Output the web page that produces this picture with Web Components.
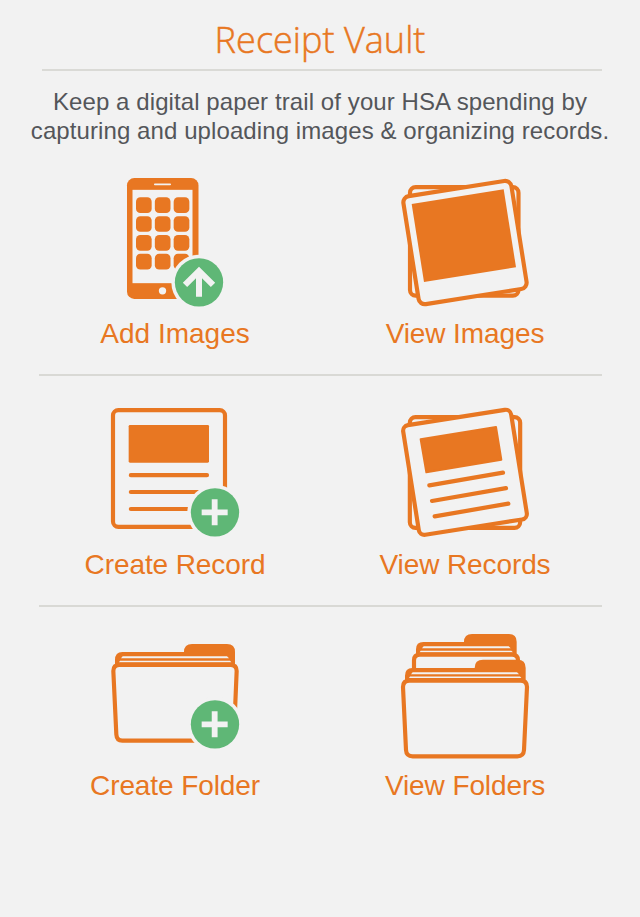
<!DOCTYPE html>
<html lang="en">
<head>
<meta charset="utf-8">
<title>Receipt Vault</title>
<style>
html,body{margin:0;background:#f2f2f2}
</style>
</head>
<body>
<receipt-vault></receipt-vault>
<script>
const BG = '#f2f2f2';
const badge = (x, y, glyph) => `<circle cx="${x}" cy="${y}" r="83" fill="${BG}"/><circle cx="${x}" cy="${y}" r="72.5" fill="#5fb776"/>${glyph}`;
const plus = (x, y) => badge(x, y, `<path d="M${x-40} ${y}h78M${x-1} ${y-39}v78" stroke="${BG}" stroke-width="17.5" fill="none"/>`);
const apps = () => {
  let s = '';
  for (const y of [97, 153.5, 210, 266.5]) for (const x of [78, 134.5, 191]) s += `<rect x="${x}" y="${y}" width="47" height="47" rx="13"/>`;
  return s;
};
const ICONS = {
  'phone-upload': `<g transform="translate(30 0)">
    <rect x="51" y="39" width="214.500" height="363" rx="22"/>
    <rect x="67.500" y="74.500" width="180" height="280" fill="${BG}"/>
    <rect x="132" y="55.500" width="51" height="5.500" rx="2.500" fill="${BG}"/>
    ${apps()}
    <circle cx="157.500" cy="377.500" r="11" fill="${BG}"/>
    ${badge(267, 352, `<path d="M267 305.500L315.500 353L302.500 366L276 339.500V395.500H258V339.500L231.500 366L218.500 353Z" fill="${BG}"/>`)}
  </g>`,
  'photos': `<rect x="60" y="66.500" width="325.500" height="325.500" rx="17" class="frame"/>
    <rect x="61" y="68.500" width="328" height="328" rx="19" transform="rotate(-9 225.500 232.500)" class="frame"/>
    <path d="M65 117L341 73L378 307L102 351Z"/>`,
  'record-add': `<rect x="39" y="45.500" width="336" height="350" rx="16" class="frame"/>
    <rect x="86" y="90" width="241" height="113" rx="4"/>
    <path class="rule" d="M92.500 240.500H321M92.500 291H321M92.500 342H321"/>
    ${plus(345, 352)}`,
  'records': `<rect x="59.500" y="66.500" width="331" height="332" rx="17" class="frame"/>
    <rect x="61" y="65.500" width="328" height="333" rx="17" transform="rotate(-9 225 232)" class="frame"/>
    <path d="M92 133L318 96L334 194L109 232Z" stroke="#e87722" stroke-width="6" stroke-linejoin="round"/>
    <path class="rule" d="M118 271L339 233M126 318L348 279.500M134 364L355 326"/>`,
  'folder-add': `<path d="M45 126V105Q45 81 67 81H252Q252 57 276 57H381Q405 57 405 81V126Z"/>
    <path class="sheet" d="M68 94H381L387 99.500H63ZM60 107H390L394 111.500H57Z"/>
    <path class="frame" d="M59 119.500H391Q410 119.500 410 138L402 328Q401 347 383 347H67Q50 347 49 328L40 138Q40 119.500 59 119.500Z"/>
    ${plus(345, 298)}`,
  'folders': `<path d="M78 96V73Q78 51 100 51H222Q222 27 246 27H357Q380 27 380 50V96Z"/>
    <path class="sheet" d="M101 64H356L362 69.500H96ZM92 77.500H364L369 82H89Z"/>
    <path class="frame" d="M72 145V106Q72 89 90 89H366Q384 89 384 106V145Z"/>
    <path d="M45 174V152Q45 129 67 129H254Q254 104.500 279 104.500H383Q407 104.500 407 129V174Z"/>
    <path class="sheet" d="M68 142H381L387 147.500H63ZM60 154.500H390L394 159H57Z"/>
    <path class="frame" d="M59 167H391Q411 167 411 186L402 375Q401 394 382 394H68Q49 394 48 375L39 186Q39 167 59 167Z"/>`
};

class VaultIcon extends HTMLElement {
  connectedCallback() {
    this.attachShadow({mode: 'open'}).innerHTML = `<style>
      :host{display:block;width:150px;height:150px}
      svg{display:block;overflow:visible;fill:#e87722}
      .frame{fill:${BG};stroke:#e87722;stroke-width:12.5}
      .rule{fill:none;stroke:#e87722;stroke-width:12.5;stroke-linecap:round}
      .sheet{fill:${BG}}
    </style><svg width="150" height="150" viewBox="0 0 450 450">${ICONS[this.getAttribute('name')]}</svg>`;
  }
}
customElements.define('vault-icon', VaultIcon);

class VaultAction extends HTMLElement {
  connectedCallback() {
    this.attachShadow({mode: 'open'}).innerHTML = `<style>
      :host{display:flex;flex-direction:column;align-items:center;color:#e87722;font:28px/32px "Liberation Sans",Arial,sans-serif}
      vault-icon{height:var(--icon-height,150px)}
      span{margin-top:var(--label-gap,3px);white-space:nowrap;letter-spacing:var(--track,-.1px)}
    </style><vault-icon name="${this.getAttribute('icon')}"></vault-icon><span><slot></slot></span>`;
  }
}
customElements.define('vault-action', VaultAction);

class VaultRow extends HTMLElement {
  connectedCallback() {
    this.attachShadow({mode: 'open'}).innerHTML = `<style>
      :host{display:grid;grid-template-columns:290px 290px;justify-content:center;box-sizing:border-box}
    </style><slot></slot>`;
  }
}
customElements.define('vault-row', VaultRow);

class VaultHeader extends HTMLElement {
  connectedCallback() {
    this.attachShadow({mode: 'open'}).innerHTML = `<style>
      :host{display:block;height:165px;box-sizing:border-box;padding-top:14px;text-align:center}
      h1{margin:0;font:300 37px/50px "Open Sans","Noto Sans",sans-serif;color:#e87722;-webkit-text-stroke:.5px #e87722;white-space:nowrap;transform:scaleX(var(--title-fit,.975))}
      hr{width:560px;height:2px;margin:5px 38px 0 42px;border:0;background:#dadad6}
      p{margin:16px 0 0;font:24px/29px "Liberation Sans",Arial,sans-serif;letter-spacing:.09px;color:#54565a;white-space:nowrap}
    </style><h1><slot name="title"></slot></h1><hr><p><slot></slot></p>`;
  }
}
customElements.define('vault-header', VaultHeader);

class ReceiptVault extends HTMLElement {
  connectedCallback() {
    this.attachShadow({mode: 'open'}).innerHTML = `<style>
      :host{display:block;width:640px;height:917px;background:${BG};overflow:hidden}
      vault-row{height:230px}
      .first{--track:0px}
      .second{--label-gap:4px}
      .third{--icon-height:140px;--label-gap:5px}
      .divided{background:linear-gradient(#d9d9d5,#d9d9d5) 38.500px var(--line) / 563px 2px no-repeat}
    </style>
    <vault-header><span slot="title">Receipt Vault</span>Keep a digital paper trail of your HSA spending by<br>capturing and uploading images &amp; organizing records.</vault-header>
    <vault-row class="divided" style="--line:209px"><vault-action class="first" icon="phone-upload">Add Images</vault-action><vault-action icon="photos">View Images</vault-action></vault-row>
    <vault-row class="divided second" style="--line:210px"><vault-action icon="record-add">Create Record</vault-action><vault-action icon="records">View Records</vault-action></vault-row>
    <vault-row class="third"><vault-action icon="folder-add">Create Folder</vault-action><vault-action icon="folders">View Folders</vault-action></vault-row>`;
  }
}
customElements.define('receipt-vault', ReceiptVault);
</script>
</body>
</html>
